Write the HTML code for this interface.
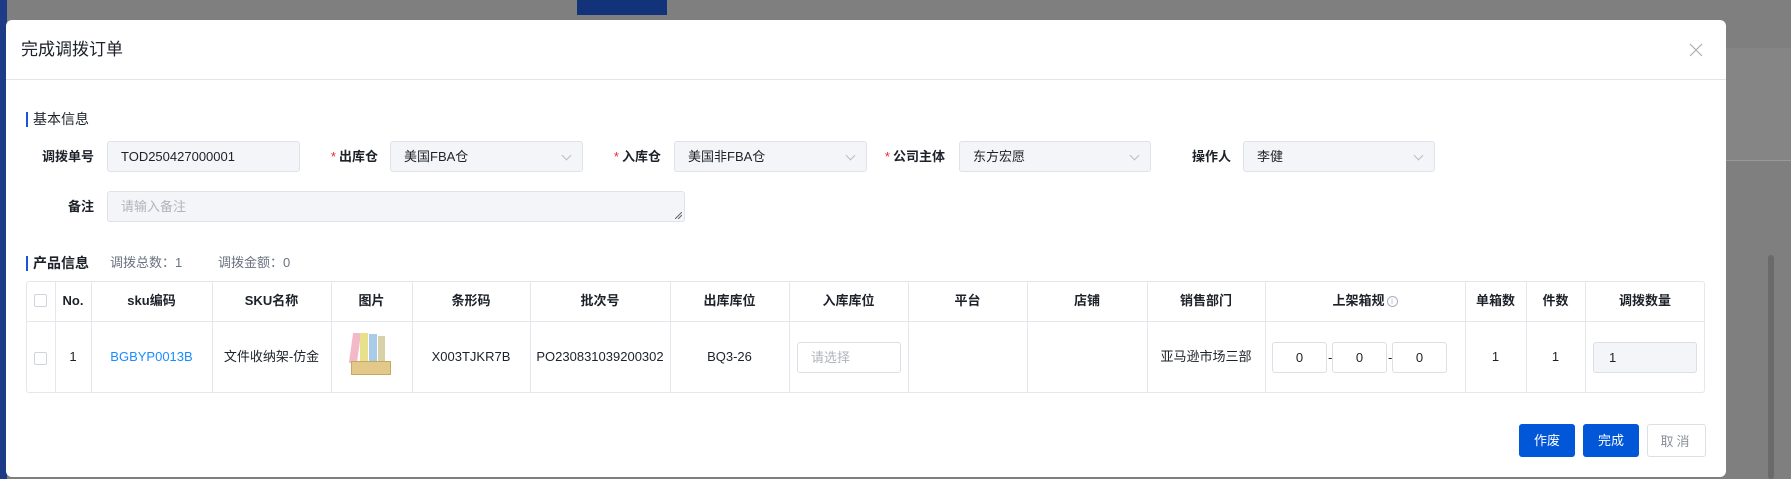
<!DOCTYPE html>
<html><head><meta charset="utf-8"><style>
*{box-sizing:border-box;margin:0;padding:0}
body{width:1791px;height:479px;overflow:hidden;background:#7f7f7f;font-family:"Liberation Sans","Noto Sans CJK SC",sans-serif;font-size:13px;color:#1d2129;position:relative}
.a{position:absolute}
.modal{left:6px;top:20px;width:1720px;height:457px;background:#fff;border-radius:6px}
.lbl{position:absolute;font-weight:bold;font-size:13px;color:#1d2129;text-align:right;line-height:31px}
.lbl i{color:#f5222d;font-style:normal;font-weight:normal;margin-right:3px}
.inp{position:absolute;height:31px;background:#f4f5f8;border:1px solid #dfe2e8;border-radius:3px;line-height:29px;padding-left:13px;font-size:13px}
.arr{position:absolute;right:12px;top:10px;width:7px;height:7px;border-right:1px solid #b8bcc6;border-bottom:1px solid #b8bcc6;transform:rotate(45deg)}
.th,.td{position:absolute;text-align:center;font-size:13px}
.th{font-weight:bold;top:281px;height:40px;line-height:40px}
.td{top:321px;height:72px;line-height:72px}
.vl{position:absolute;top:281px;height:112px;width:1px;background:#e4e7ec}
.bx{position:absolute;height:31px;border:1px solid #dcdfe6;border-radius:3px;background:#fff;line-height:29px;text-align:center}
.btn{position:absolute;top:424px;height:33px;border-radius:3px;line-height:33px;text-align:center;font-size:13px}
</style></head><body>
<div class="a" style="left:0;top:0;width:7px;height:479px;background:#1d3b86"></div>
<div class="a" style="left:577px;top:0;width:90px;height:15px;background:#12327a"></div>
<div class="a" style="left:1726px;top:48px;width:65px;height:112px;background:#858585"></div>
<div class="a" style="left:1726px;top:160px;width:65px;height:1px;background:#999"></div>
<div class="a" style="left:1768px;top:255px;width:6px;height:224px;background:#6a6a6a;border-radius:3px"></div>
<div class="a modal"></div>
<div class="a" style="left:21px;top:40px;font-size:17px;line-height:20px">完成调拨订单</div>
<svg class="a" style="left:1689px;top:43px" width="14" height="14" viewBox="0 0 14 14"><path d="M1 1L13 13M13 1L1 13" stroke="#a8adb6" stroke-width="1.2" fill="none"/></svg>
<div class="a" style="left:6px;top:79px;width:1720px;height:1px;background:#e1e5ec"></div>

<div class="a" style="left:26px;top:112px;width:2px;height:15px;background:#1657d6"></div>
<div class="a" style="left:33px;top:110px;font-size:14px;line-height:18px">基本信息</div>

<div class="lbl" style="left:30px;top:141px;width:64px">调拨单号</div>
<div class="inp" style="left:107px;top:141px;width:193px">TOD250427000001</div>
<div class="lbl" style="left:310px;top:141px;width:68px"><i>*</i>出库仓</div>
<div class="inp" style="left:390px;top:141px;width:193px">美国FBA仓<span class="arr"></span></div>
<div class="lbl" style="left:594px;top:141px;width:67px"><i>*</i>入库仓</div>
<div class="inp" style="left:674px;top:141px;width:193px">美国非FBA仓<span class="arr"></span></div>
<div class="lbl" style="left:870px;top:141px;width:75px"><i>*</i>公司主体</div>
<div class="inp" style="left:959px;top:141px;width:192px">东方宏愿<span class="arr"></span></div>
<div class="lbl" style="left:1180px;top:141px;width:51px">操作人</div>
<div class="inp" style="left:1243px;top:141px;width:192px">李健<span class="arr"></span></div>

<div class="lbl" style="left:30px;top:191px;width:64px">备注</div>
<div class="inp" style="left:107px;top:191px;width:578px;color:#b0b4bc">请输入备注
<svg class="a" style="right:2px;bottom:2px" width="7" height="7" viewBox="0 0 7 7"><path d="M0 7L7 0M3 7L7 3" stroke="#666" stroke-width="1"/></svg></div>

<div class="a" style="left:26px;top:256px;width:2px;height:15px;background:#1657d6"></div>
<div class="a" style="left:33px;top:254px;font-size:14px;font-weight:bold;line-height:18px">产品信息</div>
<div class="a" style="left:110px;top:254px;color:#6b7280;line-height:18px">调拨总数：1</div>
<div class="a" style="left:218px;top:254px;color:#6b7280;line-height:18px">调拨金额：0</div>

<div class="a" style="left:26px;top:281px;width:1679px;height:112px;border:1px solid #e4e7ec;border-radius:3px"></div>
<div class="a" style="left:26px;top:321px;width:1679px;height:1px;background:#e4e7ec"></div>
<div class="vl" style="left:55px"></div><div class="vl" style="left:91px"></div><div class="vl" style="left:212px"></div><div class="vl" style="left:331px"></div><div class="vl" style="left:412px"></div><div class="vl" style="left:530px"></div><div class="vl" style="left:670px"></div><div class="vl" style="left:789px"></div><div class="vl" style="left:908px"></div><div class="vl" style="left:1027px"></div><div class="vl" style="left:1147px"></div><div class="vl" style="left:1265px"></div><div class="vl" style="left:1465px"></div><div class="vl" style="left:1526px"></div><div class="vl" style="left:1585px"></div>

<div class="a" style="left:34px;top:294px;width:13px;height:13px;border:1px solid #d0d4dc;border-radius:2px"></div>
<div class="a" style="left:34px;top:352px;width:13px;height:13px;border:1px solid #d0d4dc;border-radius:2px"></div>
<div class="th" style="left:55px;width:36px">No.</div>
<div class="th" style="left:91px;width:121px">sku编码</div>
<div class="th" style="left:212px;width:119px">SKU名称</div>
<div class="th" style="left:331px;width:81px">图片</div>
<div class="th" style="left:412px;width:118px">条形码</div>
<div class="th" style="left:530px;width:140px">批次号</div>
<div class="th" style="left:670px;width:119px">出库库位</div>
<div class="th" style="left:789px;width:119px">入库库位</div>
<div class="th" style="left:908px;width:119px">平台</div>
<div class="th" style="left:1027px;width:120px">店铺</div>
<div class="th" style="left:1147px;width:118px">销售部门</div>
<div class="th" style="left:1265px;width:200px">上架箱规<span style="display:inline-block;width:11px;height:11px;border:1px solid #a8b0c0;border-radius:50%;font-size:8px;line-height:9px;color:#a8b0c0;font-weight:normal;margin-left:2px;vertical-align:middle">i</span></div>
<div class="th" style="left:1465px;width:61px">单箱数</div>
<div class="th" style="left:1526px;width:59px">件数</div>
<div class="th" style="left:1585px;width:120px">调拨数量</div>

<div class="td" style="left:55px;width:36px">1</div>
<div class="td" style="left:91px;width:121px;color:#1a8cff">BGBYP0013B</div>
<div class="td" style="left:212px;width:119px">文件收纳架-仿金</div>
<div class="a" style="left:349px;top:333px;width:48px;height:44px">
 <div class="a" style="left:2px;top:0;width:8px;height:30px;background:#f3b9c8;transform:skewX(-8deg)"></div>
 <div class="a" style="left:11px;top:0;width:8px;height:30px;background:#e8e08a"></div>
 <div class="a" style="left:20px;top:1px;width:8px;height:29px;background:#a8cce8"></div>
 <div class="a" style="left:29px;top:3px;width:7px;height:27px;background:#d8d0a8"></div>
 <div class="a" style="left:2px;top:28px;width:40px;height:14px;background:#e2c98a;border:1px solid #c8a860"></div>
</div>
<div class="td" style="left:412px;width:118px">X003TJKR7B</div>
<div class="td" style="left:530px;width:140px">PO230831039200302</div>
<div class="td" style="left:670px;width:119px">BQ3-26</div>
<div class="bx" style="left:797px;top:342px;width:104px;text-align:left;padding-left:13px;color:#b0b4bc">请选择</div>
<div class="td" style="left:1147px;width:118px">亚马逊市场三部</div>
<div class="bx" style="left:1272px;top:342px;width:55px">0</div>
<div class="a" style="left:1328px;top:350px">-</div>
<div class="bx" style="left:1332px;top:342px;width:55px">0</div>
<div class="a" style="left:1388px;top:350px">-</div>
<div class="bx" style="left:1392px;top:342px;width:55px">0</div>
<div class="td" style="left:1465px;width:61px">1</div>
<div class="td" style="left:1526px;width:59px">1</div>
<div class="bx" style="left:1593px;top:342px;width:104px;background:#f4f5f8;text-align:left;padding-left:15px">1</div>

<div class="btn" style="left:1519px;width:56px;background:#0256d8;color:#fff">作废</div>
<div class="btn" style="left:1583px;width:56px;background:#0256d8;color:#fff">完成</div>
<div class="btn" style="left:1647px;width:59px;border:1px solid #dcdfe6;color:#8a8f99;letter-spacing:3px">取消</div>
</body></html>
